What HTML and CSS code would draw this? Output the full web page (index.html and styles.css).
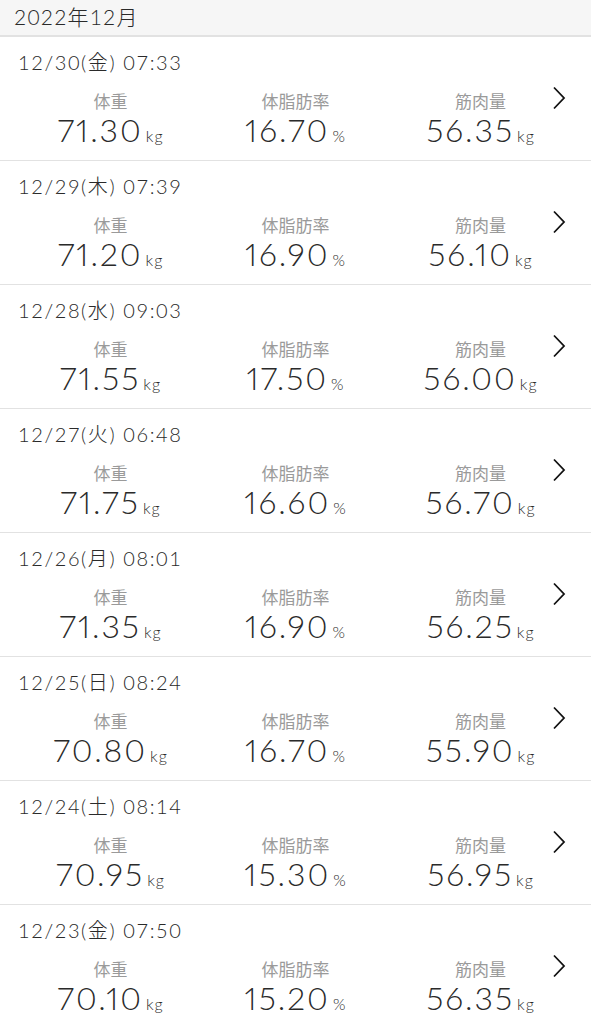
FILE: index.html
```
<html lang="ja">

<head>
    <meta charset="UTF-8">
    <meta name="viewport" content="width=device-width, initial-scale=1.0">
    <title>体組成 履歴</title>
    <link rel="stylesheet" href="styles.css">
</head>

<body>
    <div class="month">2022年12月</div>
    <div class="list" id="list"></div>

    <script>
        var records = [
            ["12/30(金) 07:33", "71.30", "16.70", "56.35"],
            ["12/29(木) 07:39", "71.20", "16.90", "56.10"],
            ["12/28(水) 09:03", "71.55", "17.50", "56.00"],
            ["12/27(火) 06:48", "71.75", "16.60", "56.70"],
            ["12/26(月) 08:01", "71.35", "16.90", "56.25"],
            ["12/25(日) 08:24", "70.80", "16.70", "55.90"],
            ["12/24(土) 08:14", "70.95", "15.30", "56.95"],
            ["12/23(金) 07:50", "70.10", "15.20", "56.35"]
        ];

        function cell(label, value, unit) {
            return '<div class="cell">' +
                '<div class="label">' + label + '</div>' +
                '<div class="value">' + value + '<span class="unit">' + unit + '</span></div>' +
                '</div>';
        }

        var html = "";
        for (var i = 0; i < records.length; i++) {
            var r = records[i];
            html += '<div class="row">' +
                '<div class="date">' + r[0] + '</div>' +
                '<div class="cells">' +
                cell("体重", r[1], "kg") +
                cell("体脂肪率", r[2], "%") +
                cell("筋肉量", r[3], "kg") +
                '</div>' +
                '<svg class="chevron" width="14" height="24" viewBox="0 0 14 24"><path d="M2 1.5 L12 12 L2 22.5" fill="none" stroke="#111" stroke-width="1.8"/></svg>' +
                '</div>';
        }
        document.getElementById("list").innerHTML = html;
    </script>
</body>

</html>
```
FILE: styles.css
```
* {
    margin: 0;
    padding: 0;
    box-sizing: border-box;
}

body {
    font-family: 'Lato', 'Noto Sans CJK JP', sans-serif;
    color: #2a2a2a;
    background: #fff;
    width: 591px;
}

.month {
    height: 37px;
    padding-left: 14px;
    font-size: 21px;
    font-weight: 300;
    line-height: 34px;
    letter-spacing: 1.2px;
    background: #f6f6f6;
    border-bottom: 2px solid #e2e2e2;
}

.row {
    position: relative;
    height: 124px;
    border-bottom: 1px solid #e2e2e2;
    padding: 13px 18px 0 18px;
}

.date {
    font-size: 20px;
    font-weight: 300;
    line-height: 24px;
    letter-spacing: 1.6px;
}

.cells {
    display: grid;
    grid-template-columns: repeat(3, 185px);
    margin-top: 18px;
}

.cell {
    text-align: center;
}

.label {
    color: #9a9a9a;
    font-size: 17px;
    line-height: 20px;
}

.value {
    font-size: 32px;
    font-weight: 300;
    line-height: 36px;
    letter-spacing: 2px;
    font-variant-numeric: proportional-nums;
}

.unit {
    font-size: 16px;
    font-weight: 300;
    margin-left: 3px;
    letter-spacing: 1px;
}

.chevron {
    position: absolute;
    right: 25px;
    top: 49px;
}
```
